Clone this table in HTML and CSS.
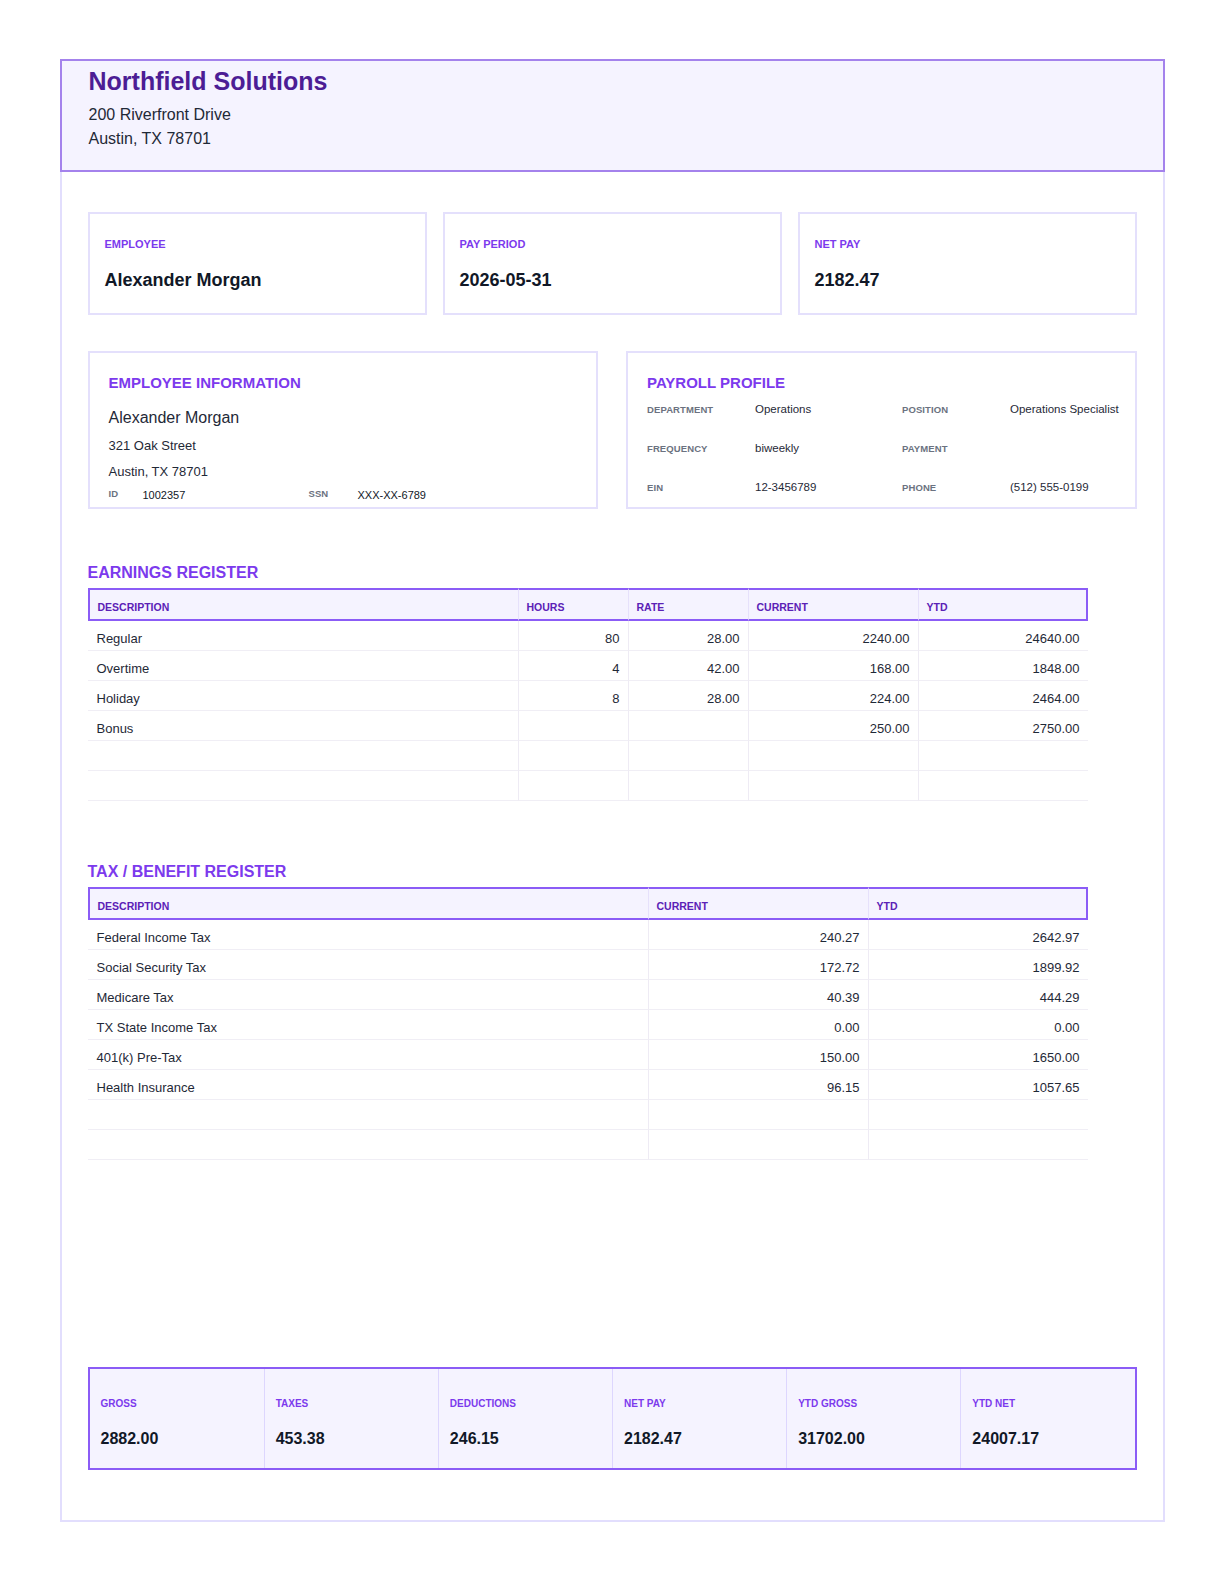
FILE: index.html
```html
<!DOCTYPE html>
<html lang="en">
<head>
<meta charset="utf-8">
<title>Pay Statement - Northfield Solutions</title>
<link rel="stylesheet" href="styles.css">
</head>
<body>
<div class="sheet">
  <header class="company">
    <h1 class="company-name">Northfield Solutions</h1>
    <div class="company-addr">
      <div>200 Riverfront Drive</div>
      <div>Austin, TX 78701</div>
    </div>
  </header>

  <main class="content">
    <section class="highlights">
      <div class="hl-card">
        <div class="hl-label">EMPLOYEE</div>
        <div class="hl-value">Alexander Morgan</div>
      </div>
      <div class="hl-card">
        <div class="hl-label">PAY PERIOD</div>
        <div class="hl-value">2026-05-31</div>
      </div>
      <div class="hl-card">
        <div class="hl-label">NET PAY</div>
        <div class="hl-value">2182.47</div>
      </div>
    </section>

    <section class="info-row">
      <div class="info-card">
        <h2 class="info-title">EMPLOYEE INFORMATION</h2>
        <div class="emp-name">Alexander Morgan</div>
        <div class="emp-line emp-line-first">321 Oak Street</div>
        <div class="emp-line">Austin, TX 78701</div>
        <div class="emp-ids">
          <span class="k">ID</span><span class="v">1002357</span>
          <span class="k">SSN</span><span class="v">XXX-XX-6789</span>
        </div>
      </div>
      <div class="info-card">
        <h2 class="info-title">PAYROLL PROFILE</h2>
        <div class="profile-grid">
          <span class="k">DEPARTMENT</span><span class="v">Operations</span>
          <span class="k">POSITION</span><span class="v">Operations Specialist</span>
          <span class="k">FREQUENCY</span><span class="v">biweekly</span>
          <span class="k">PAYMENT</span><span class="v"></span>
          <span class="k">EIN</span><span class="v">12-3456789</span>
          <span class="k">PHONE</span><span class="v">(512) 555-0199</span>
        </div>
      </div>
    </section>

    <section class="register earnings">
      <h2 class="reg-title">EARNINGS REGISTER</h2>
      <table class="reg-table">
        <colgroup>
          <col class="c43"><col class="c11"><col class="c12"><col class="c17"><col class="c17">
        </colgroup>
        <thead>
          <tr><th>DESCRIPTION</th><th>HOURS</th><th>RATE</th><th>CURRENT</th><th>YTD</th></tr>
        </thead>
        <tbody>
          <tr><td>Regular</td><td class="num">80</td><td class="num">28.00</td><td class="num">2240.00</td><td class="num">24640.00</td></tr>
          <tr><td>Overtime</td><td class="num">4</td><td class="num">42.00</td><td class="num">168.00</td><td class="num">1848.00</td></tr>
          <tr><td>Holiday</td><td class="num">8</td><td class="num">28.00</td><td class="num">224.00</td><td class="num">2464.00</td></tr>
          <tr><td>Bonus</td><td class="num"></td><td class="num"></td><td class="num">250.00</td><td class="num">2750.00</td></tr>
          <tr><td>&nbsp;</td><td></td><td></td><td></td><td></td></tr>
          <tr><td>&nbsp;</td><td></td><td></td><td></td><td></td></tr>
        </tbody>
      </table>
    </section>

    <section class="register taxes">
      <h2 class="reg-title">TAX / BENEFIT REGISTER</h2>
      <table class="reg-table">
        <colgroup>
          <col class="c56"><col class="c22"><col class="c22">
        </colgroup>
        <thead>
          <tr><th>DESCRIPTION</th><th>CURRENT</th><th>YTD</th></tr>
        </thead>
        <tbody>
          <tr><td>Federal Income Tax</td><td class="num">240.27</td><td class="num">2642.97</td></tr>
          <tr><td>Social Security Tax</td><td class="num">172.72</td><td class="num">1899.92</td></tr>
          <tr><td>Medicare Tax</td><td class="num">40.39</td><td class="num">444.29</td></tr>
          <tr><td>TX State Income Tax</td><td class="num">0.00</td><td class="num">0.00</td></tr>
          <tr><td>401(k) Pre-Tax</td><td class="num">150.00</td><td class="num">1650.00</td></tr>
          <tr><td>Health Insurance</td><td class="num">96.15</td><td class="num">1057.65</td></tr>
          <tr><td>&nbsp;</td><td></td><td></td></tr>
          <tr><td>&nbsp;</td><td></td><td></td></tr>
        </tbody>
      </table>
    </section>

    <section class="totals">
      <div class="tot-cell"><div class="tot-label">GROSS</div><div class="tot-value">2882.00</div></div>
      <div class="tot-cell"><div class="tot-label">TAXES</div><div class="tot-value">453.38</div></div>
      <div class="tot-cell"><div class="tot-label">DEDUCTIONS</div><div class="tot-value">246.15</div></div>
      <div class="tot-cell"><div class="tot-label">NET PAY</div><div class="tot-value">2182.47</div></div>
      <div class="tot-cell"><div class="tot-label">YTD GROSS</div><div class="tot-value">31702.00</div></div>
      <div class="tot-cell"><div class="tot-label">YTD NET</div><div class="tot-value">24007.17</div></div>
    </section>
  </main>
</div>
</body>
</html>
```

FILE: styles.css
```css
* { box-sizing: border-box; }

html, body {
  margin: 0;
  padding: 0;
  background: #ffffff;
}

body {
  font-family: "Liberation Sans", Arial, Helvetica, sans-serif;
  color: #1f2937;
}

.sheet {
  width: 1105px;
  margin: 59px auto 0;
  border: 2px solid #e2defd;
}

/* Company header */
.company {
  margin: -2px -2px 0 -2px;
  border: 2px solid #a482ec;
  background: #f5f3ff;
  padding: 5px 27px 19px 27px;
}

.company-name {
  margin: 0;
  font-size: 25px;
  line-height: 30px;
  font-weight: 700;
  color: #4c1d95;
}

.company-addr {
  margin-top: 7px;
  font-size: 16px;
  line-height: 24px;
  color: #1f2937;
}

/* Content */
.content {
  padding: 40px 26px 50px 26px;
}

/* Highlight cards */
.highlights {
  display: grid;
  grid-template-columns: repeat(3, minmax(0, 1fr));
  gap: 16px;
}

.hl-card {
  border: 2px solid #e4e0fc;
  padding: 24px 15px 22px;
}

.hl-label {
  font-size: 11px;
  line-height: 13px;
  font-weight: 700;
  color: #7c3aed;
}

.hl-value {
  margin-top: 18px;
  font-size: 18px;
  line-height: 22px;
  font-weight: 700;
  color: #111827;
}

/* Info cards */
.info-row {
  margin-top: 36px;
  display: grid;
  grid-template-columns: minmax(0, 1fr) minmax(0, 1fr);
  gap: 28px;
}

.info-card {
  min-width: 0;
  border: 2px solid #e4e0fc;
  padding: 20px 19px 5px;
}

.info-title {
  margin: 0;
  font-size: 15px;
  line-height: 20px;
  font-weight: 700;
  color: #7c3aed;
}

.emp-name {
  margin-top: 13px;
  font-size: 16px;
  line-height: 24px;
  color: #1f2937;
}

.emp-line {
  font-size: 13px;
  line-height: 26px;
  color: #1f2937;
}

.emp-line-first { margin-top: 3px; }

.emp-ids {
  margin-top: 3px;
  display: grid;
  grid-template-columns: 34px 166px 49px 1fr;
  align-items: start;
}

.emp-ids .k,
.profile-grid .k {
  font-size: 9.5px;
  font-weight: 700;
  color: #6b7280;
  letter-spacing: 0.1px;
}

.emp-ids .k { line-height: 11px; }

.emp-ids .v {
  font-size: 11px;
  line-height: 14px;
  color: #111827;
}

.profile-grid {
  margin-top: 8px;
  display: grid;
  grid-template-columns: 108px 147px 108px minmax(0, 1fr);
  row-gap: 21.8px;
  align-items: baseline;
}

.profile-grid .k { line-height: 16px; }

.profile-grid .v {
  font-size: 11.5px;
  line-height: 16px;
  color: #1f2937;
  white-space: nowrap;
}

/* Registers */
.register.earnings { margin-top: 54px; }
.register.taxes { margin-top: 61px; }

.reg-title {
  margin: 0 0 5px;
  font-size: 16px;
  line-height: 20px;
  font-weight: 700;
  color: #7c3aed;
}

.reg-table {
  width: 1000px;
  border-collapse: separate;
  border-spacing: 0;
  table-layout: fixed;
}

.c43 { width: 43%; }
.c11 { width: 11%; }
.c12 { width: 12%; }
.c17 { width: 17%; }
.c56 { width: 56%; }
.c22 { width: 22%; }

.reg-table th {
  background: #f5f3ff;
  border-top: 2px solid #8b5cf6;
  border-bottom: 2px solid #8b5cf6;
  border-left: 1px solid #e6e1fb;
  padding: 10px 8px 4px;
  font-size: 10.5px;
  line-height: 15px;
  font-weight: 700;
  color: #5b21b6;
  text-align: left;
}

.reg-table th:first-child { border-left: 2px solid #8b5cf6; }
.reg-table th:last-child { border-right: 2px solid #8b5cf6; }

.reg-table td {
  border-bottom: 1px solid #f0eef5;
  border-left: 1px solid #eeebf4;
  padding: 10px 8px 3px;
  font-size: 13px;
  line-height: 16px;
  color: #1f2937;
}

.reg-table td:first-child { border-left: 0; padding-left: 9px; }

.reg-table td.num { text-align: right; }

/* Totals */
.totals {
  margin-top: 207px;
  display: grid;
  grid-template-columns: repeat(6, minmax(0, 1fr));
  border: 2px solid #8b5cf6;
  background: #f5f3ff;
}

.tot-cell {
  padding: 29px 11px 19px;
  border-left: 1px solid #ddd6fe;
}

.tot-cell:first-child { border-left: 0; }

.tot-label {
  font-size: 10px;
  line-height: 12px;
  font-weight: 700;
  color: #7c3aed;
}

.tot-value {
  margin-top: 19px;
  font-size: 16px;
  line-height: 20px;
  font-weight: 700;
  color: #111827;
}
```
